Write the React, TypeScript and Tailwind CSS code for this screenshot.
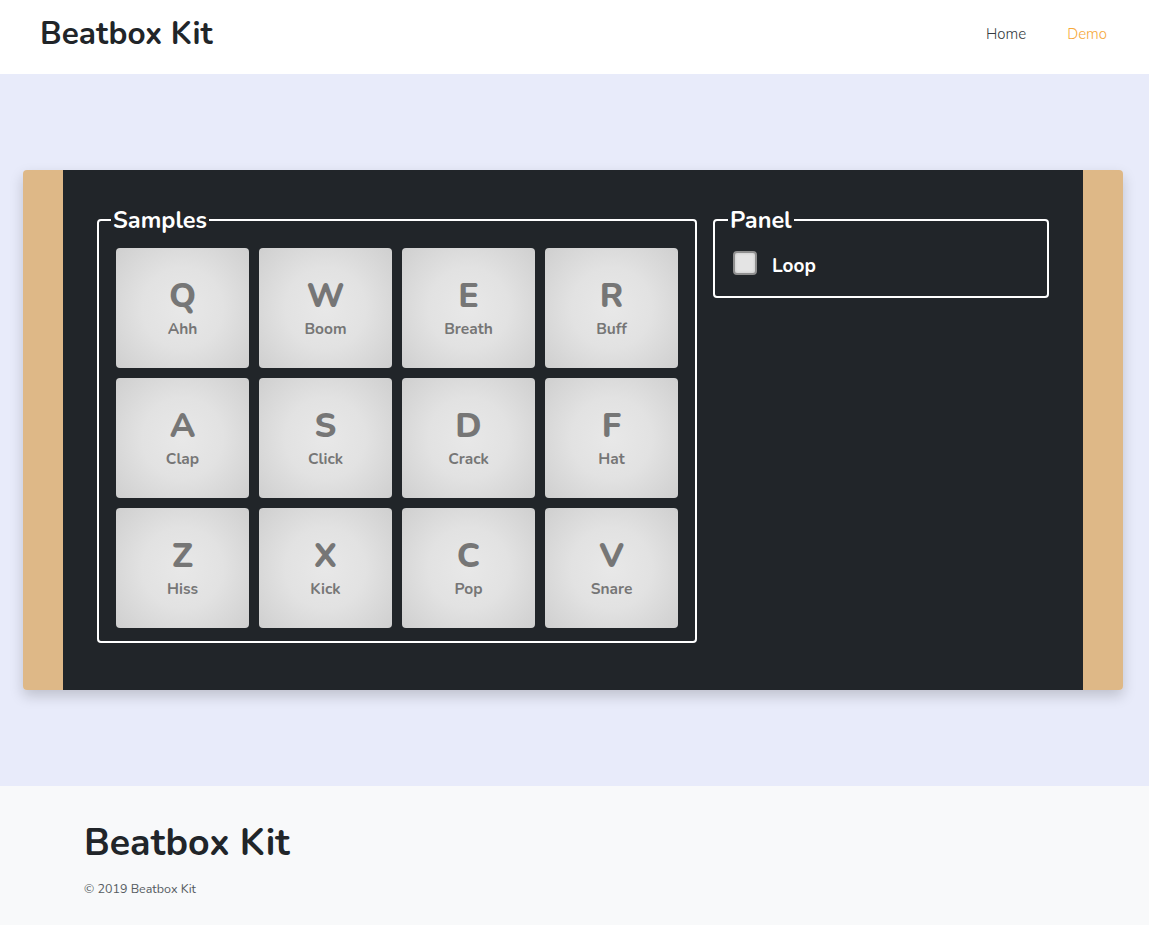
import React, { useState } from 'react';

interface Pad {
  key: string;
  name: string;
}

const pads: Pad[] = [
  { key: 'Q', name: 'Ahh' },
  { key: 'W', name: 'Boom' },
  { key: 'E', name: 'Breath' },
  { key: 'R', name: 'Buff' },
  { key: 'A', name: 'Clap' },
  { key: 'S', name: 'Click' },
  { key: 'D', name: 'Crack' },
  { key: 'F', name: 'Hat' },
  { key: 'Z', name: 'Hiss' },
  { key: 'X', name: 'Kick' },
  { key: 'C', name: 'Pop' },
  { key: 'V', name: 'Snare' },
];

const font = "font-['Nunito','Lato','Noto_Sans',sans-serif]";

export default function App() {
  const [loop, setLoop] = useState<boolean>(false);

  const renderPads = () => {
    return pads.map((p) => {
      return (
        <button
          key={p.key}
          className="h-[120px] rounded-[4px] bg-[radial-gradient(circle,#e8e8e8_0%,#e2e2e2_45%,#cfcfcf_100%)] flex flex-col items-center justify-center text-[#767676]"
        >
          <span className="text-[34px] leading-[36px] font-extrabold">{p.key}</span>
          <span className="text-[15.5px] leading-[18px] font-bold mt-[6px]">{p.name}</span>
        </button>
      );
    });
  };

  return (
    <div className={`${font} min-h-[925px] flex flex-col bg-[#e8ebfa]`}>
      <header className="h-[74px] bg-white flex items-center justify-between pl-[40px] pr-[42px]">
        <h1 className="text-[31.5px] font-bold text-[#212529] -mt-[6px]">Beatbox Kit</h1>
        <nav className="flex gap-[41px] text-[15px] font-light -mt-[6px]">
          <a className="text-[#343a40]">Home</a>
          <a className="text-[#f6a83a]">Demo</a>
        </nav>
      </header>

      <main className="py-[96px] px-[23px]">
        <div className="w-[1100px] h-[520px] flex rounded-[4px] overflow-hidden shadow-[0_6px_14px_rgba(0,0,0,0.18)]">
          <div className="w-[40px] bg-[#deb887]" />
          <div className="flex-1 bg-[#212529] flex items-start gap-[16px] px-[34px] pt-[37px]">
            <fieldset className="w-[600px] border-2 border-white rounded-[4px] px-[17px] pt-[1px] pb-[13px]">
              <legend className="ml-[-5px] px-[2px] text-[23.5px] font-bold text-white leading-[26px]">
                Samples
              </legend>
              <div className="grid grid-cols-4 gap-[10px] mt-[14px]">{renderPads()}</div>
            </fieldset>
            <fieldset className="w-[336px] border-2 border-white rounded-[4px] px-[18px] pt-[3px] pb-[18px]">
              <legend className="ml-[-5px] px-[2px] text-[23.5px] font-bold text-white leading-[26px]">
                Panel
              </legend>
              <label className="flex items-center gap-[15px] cursor-pointer mt-[12px]">
                <span
                  onClick={() => setLoop(!loop)}
                  className="w-[24px] h-[24px] rounded-[4px] border-2 border-[#8f8f8f] bg-[#e4e4e4] shadow-[inset_0_0_3px_rgba(0,0,0,0.15)]"
                />
                <span className="text-[19px] font-bold text-white pt-[6px] leading-[24px]">Loop</span>
              </label>
            </fieldset>
          </div>
          <div className="w-[40px] bg-[#deb887]" />
        </div>
      </main>

      <footer className="flex-1 bg-[#f8f9fa] px-[84px] pt-[35px] pb-[28px]">
        <h2 className="text-[37.5px] font-bold text-[#212529] leading-[44px]">Beatbox Kit</h2>
        <p className="text-[12.5px] text-[#555b61] mt-[15px]">© 2019 Beatbox Kit</p>
      </footer>
    </div>
  );
}
